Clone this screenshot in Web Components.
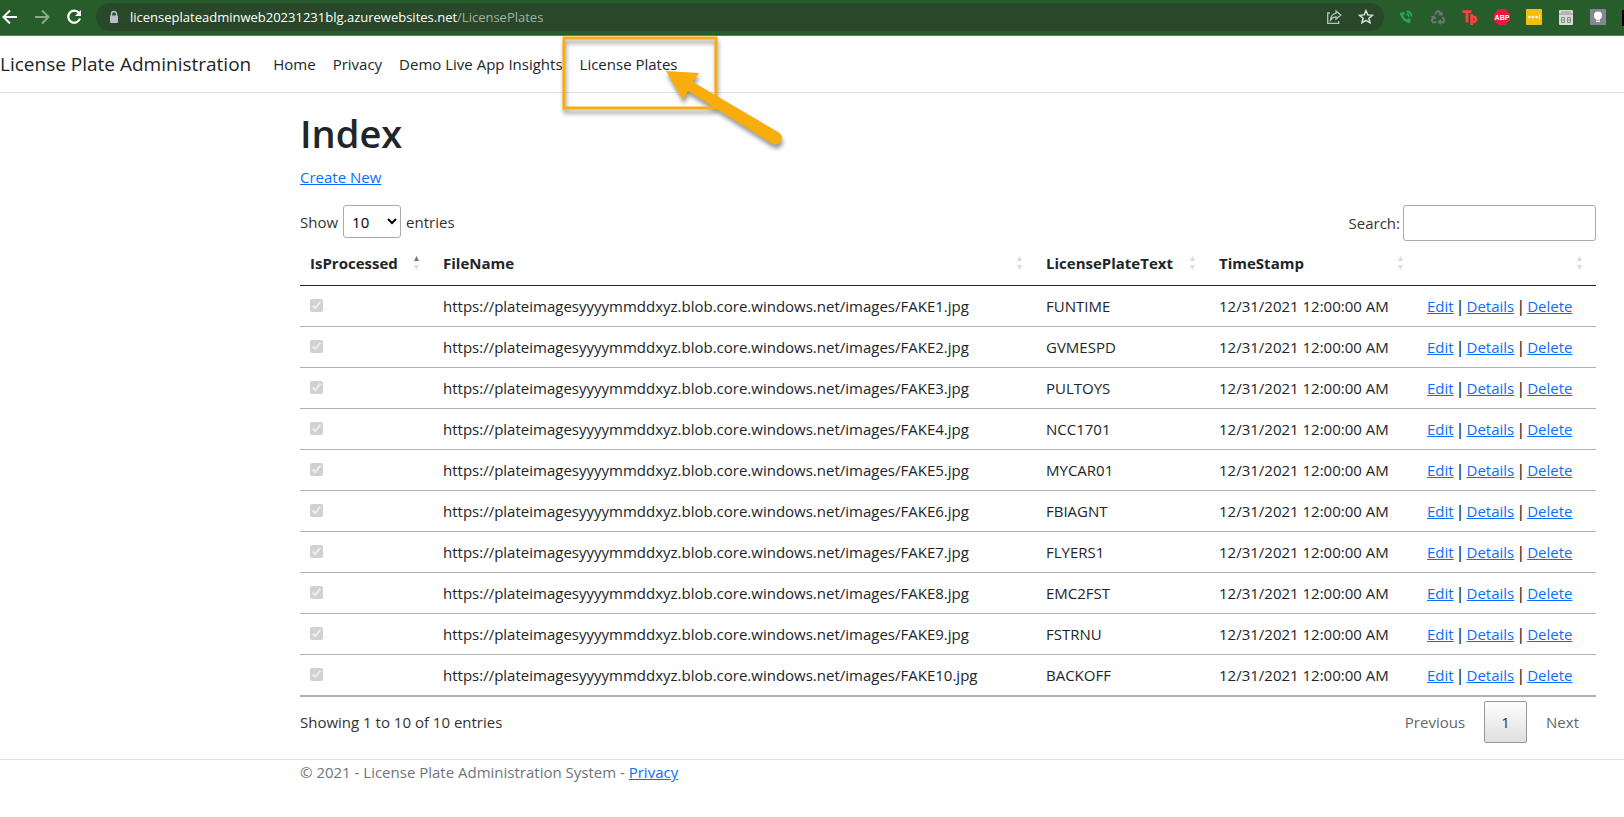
<!DOCTYPE html>
<html lang="en">
<head>
<meta charset="utf-8">
<title>Index - License Plate Administration</title>
<style>
  body { margin: 0; background: #fff; color: #212529; font: 15px/24px "Open Sans", "Noto Sans", sans-serif; --link: #0d6efd; --gutter: 300px; --end: 28px; overflow-x: hidden; }
</style>
</head>
<body>
<browser-bar host="licenseplateadminweb20231231blg.azurewebsites.net" path="/LicensePlates"></browser-bar>
<site-nav>
  <nav-link href="#home">Home</nav-link>
  <nav-link href="#privacy">Privacy</nav-link>
  <nav-link href="#insights">Demo Live App Insights</nav-link>
  <nav-link href="#plates" marked>License Plates</nav-link>
</site-nav>
<page-main heading="Index">
  <plate-table></plate-table>
</page-main>
<site-footer>© 2021 - License Plate Administration System - </site-footer>

<script>
const define = (name, html, setup) => {
  const tpl = document.createElement('template');
  tpl.innerHTML = html;
  customElements.define(name, class extends HTMLElement {
    constructor() {
      super();
      this.attachShadow({ mode: 'open' }).append(tpl.content.cloneNode(true));
    }
    connectedCallback() { if (setup) setup(this, this.shadowRoot); }
  });
};

define('browser-bar', `
<style>
  :host { display: flex; align-items: center; height: 35px; box-sizing: content-box; background: #275d2a; border-bottom: 1px solid #4f8253; font-size: 13px; line-height: 20px; overflow: hidden; }
  button { border: 0; padding: 0; background: none; display: block; flex: none; width: 16px; height: 16px; }
  svg { display: block; width: 16px; height: 16px; }
  .moves { display: flex; gap: 16px; padding: 0 14px 2px 2px; flex: none; }
  .address { flex: 1; display: flex; align-items: center; height: 28px; margin-bottom: 1px; border-radius: 14px; background: #284829; padding: 0 10px; box-sizing: border-box; min-width: 0; }
  .url { flex: 1; margin-left: 8px; color: #a2b1a3; white-space: nowrap; }
  .url b { font-weight: 400; color: #fff; }
  .tools { display: flex; gap: 16px; }
  .ext { display: flex; gap: 16px; padding: 0 16px 1px 14px; flex: none; }
  .more { width: 2px; height: 16px; background: #000; flex: none; }
</style>
<div class="moves">
  <button aria-label="Back"><svg viewBox="0 0 16 16" fill="none" stroke="#fff" stroke-width="2"><path d="M15 8H2M8 1.500 1.500 8 8 14.500"/></svg></button>
  <button aria-label="Forward"><svg viewBox="0 0 16 16" fill="none" stroke="#8ba98c" stroke-width="2"><path d="M1 8h13M8 1.500 14.500 8 8 14.500"/></svg></button>
  <button aria-label="Reload"><svg viewBox="0 0 16 16"><path d="M13 4A6 6 0 1 0 14 9.500" fill="none" stroke="#fff" stroke-width="2.200"/><path d="M15 1v6H9z" fill="#fff"/></svg></button>
</div>
<div class="address">
  <svg viewBox="0 0 16 16"><path d="M5.500 7V5a2.500 2.500 0 0 1 5 0v2" fill="none" stroke="#b9bfc6" stroke-width="1.500"/><rect x="4" y="6.500" width="8" height="7.500" rx="1" fill="#b9bfc6"/></svg>
  <span class="url"><b></b><span></span></span>
  <div class="tools">
    <button aria-label="Share"><svg viewBox="0 0 16 16" fill="none" stroke="#b8c3b9" stroke-width="1.300"><path d="M4 4H1.700v10.300h11V12"/><path d="M10 2l4.800 4L10 10V7.800C7.500 7.800 6 9 4.500 11 4.800 7.500 7 4.700 10 4.300z"/></svg></button>
    <button aria-label="Bookmark"><svg viewBox="0 0 16 16" fill="none" stroke="#dbe1db" stroke-width="1.500"><path d="M8 1.700l1.800 4.200 4.600.4-3.500 3 1.100 4.500L8 11.400l-4 2.400 1.100-4.500-3.500-3 4.600-.4z"/></svg></button>
  </div>
</div>
<div class="ext">
  <button aria-label="Calls"><svg viewBox="0 0 16 16"><g fill="none" stroke="#26a653"><path d="M3.500 3.500c0 5 3.500 9 9 9.300" stroke-width="2.600"/><path d="M2.500 5.800 6.500 4M9.500 13.500l2-4" stroke-width="3"/><path d="M8.500 2.500c3 0 5 2 5 5M8.500 5.200c1.500 0 2.500 1 2.500 2.500" stroke-width="1.800"/></g></svg></button>
  <button aria-label="Recycle"><svg viewBox="0 0 16 16" fill="none" stroke="#717475" stroke-width="2"><path d="M5 5.500 7 2.300h2l1.800 3.200M8.800 5.500h3V3M12.500 8l1.800 3.200-1 2H9.500M11 11l-2 2 2 2M6.500 13.200H3l-1.200-2L3.800 8M1.500 8.500 4 7.500l1.500 2.500"/></svg></button>
  <button aria-label="Tp"><svg viewBox="0 0 16 16" fill="none" stroke="#f2453d" stroke-width="2.800"><path d="M.5 2.600h9M5 2.600v11M9.600 5v11M9.600 9a2.400 2.400 0 1 1 0 2.500"/></svg></button>
  <button aria-label="Ad blocker"><svg viewBox="0 0 16 16"><path d="M4.700 0h6.600L16 4.700v6.600L11.300 16H4.700L0 11.300V4.700z" fill="#e8183e"/><text x="8" y="10.600" text-anchor="middle" font-size="7" font-weight="800" fill="#fff">ABP</text></svg></button>
  <button aria-label="Password"><svg viewBox="0 0 16 16"><rect width="16" height="16" rx="1" fill="#f4bd12"/><g fill="#fff"><circle cx="3.500" cy="8" r="1.200"/><circle cx="7" cy="8" r="1.200"/><circle cx="10.500" cy="8" r="1.200"/><path d="M13 5.500h1v5h-1z"/></g></svg></button>
  <button aria-label="Calendar"><svg viewBox="0 0 16 16"><rect x="1" y="1" width="14" height="15" rx="1" fill="#d9dbd8"/><path d="M1 5h14M3 3h10" stroke="#8c918c"/><path d="M3.500 8.500h3v5h-3zM9.500 8.500h3v5h-3zM3.500 11h3M9.500 11h3" fill="none" stroke="#858a85"/></svg></button>
  <button aria-label="Light"><svg viewBox="0 0 16 16"><rect width="16" height="16" rx="1" fill="#858691"/><circle cx="8" cy="6.500" r="4" fill="#fff"/><path d="M6 10h4v3H6z" fill="#fff"/><path d="M6 11.300h4" stroke="#858691" stroke-width=".8"/></svg></button>
</div>
<i class="more"></i>`, (el, root) => {
  root.querySelector('.url b').textContent = el.getAttribute('host');
  root.querySelector('.url span').textContent = el.getAttribute('path');
});

define('nav-link', `
<style>
  :host { display: block; position: relative; }
  a { display: block; padding: 8px; color: inherit; text-decoration: none; white-space: nowrap; }
  svg { display: none; position: absolute; left: -19px; top: -9px; overflow: visible; pointer-events: none; filter: drop-shadow(1px 4px 2px rgba(0,0,0,.4)); }
  :host([marked]) svg { display: block; }
</style>
<a><slot></slot></a>
<svg width="220" height="110" aria-hidden="true">
  <rect x="11" y="3" width="152" height="70" fill="none" stroke="#f9ad0d" stroke-width="3"/>
  <path d="M113 36l33 2-6 9 85 50q6 4 3 9-4 6-10 2L135 56l-5 9z" fill="#f9ad0d"/>
</svg>`, (el, root) => root.querySelector('a').href = el.getAttribute('href'));

define('site-nav', `
<style>
  :host { display: block; border-bottom: 1px solid #dee2e6; margin-bottom: 16px; }
  nav { display: flex; align-items: center; gap: 1px; height: 56px; }
  .brand { font-size: 19px; line-height: 30px; margin-right: 13px; color: inherit; text-decoration: none; white-space: nowrap; }
</style>
<nav><a class="brand" href="#top">License Plate Administration</a><slot></slot></nav>`);

define('page-main', `
<style>
  :host { display: block; padding: 0 var(--end) 0 var(--gutter); }
  h1 { margin: 0 0 8px; font-size: 38px; line-height: 48px; font-weight: 600; }
  p { margin: 0 0 16px; }
  a { color: var(--link); }
</style>
<h1></h1><p><a href="#create">Create New</a></p><slot></slot>`, (el, root) => {
  root.querySelector('h1').textContent = el.getAttribute('heading');
});

define('plate-table', `
<style>
  :host { display: block; }
  .bar { display: flex; justify-content: space-between; color: #333; height: 36px; }
  .length { display: flex; align-items: center; gap: 5px; height: 33px; }
  select { font: inherit; width: 58px; height: 33px; box-sizing: border-box; border: 1px solid #aaa; border-radius: 3px; padding: 4px; background: transparent; color: #000; }
  .search { display: flex; align-items: center; gap: 3px; }
  input[type=search] { font: inherit; width: 193px; height: 36px; box-sizing: border-box; border: 1px solid #aaa; border-radius: 3px; padding: 5px; background: transparent; margin: 0; }
  table { width: 100%; table-layout: fixed; border-collapse: separate; border-spacing: 0; border-bottom: 1px solid #b0b0b0; }
  .c1 { width: 133px; } .c3 { width: 173px; } .c4 { width: 208px; } .c5 { width: 179px; }
  th { text-align: left; font-weight: 700; font-size: 15px; padding: 10px; line-height: 24px; border-bottom: 1px solid #212529; }
  th div { display: flex; justify-content: space-between; align-items: center; height: 24px; padding-right: 3px; }
  th svg { width: 7px; height: 14px; fill: #dcdcdc; flex: none; }
  th.asc .up { fill: #777; }
  td { padding: 8px 10px; height: 24px; line-height: 24px; border-bottom: 1px solid #b0b0b0; white-space: nowrap; }
  td input { display: block; width: 13px; height: 13px; margin: 0 0 2px; }
  td i { font-family: "DejaVu Sans", sans-serif; font-style: normal; line-height: 1; }
  a { color: var(--link); }
  .foot { height: 62px; align-items: flex-start; }
  .info { padding-top: 13px; }
  .pages { display: flex; gap: 2px; padding-top: 4px; }
  .pages button { font: inherit; color: #666; height: 42px; padding: 0 16px; border: 1px solid transparent; border-radius: 2px; background: none; }
  .pages .now { width: 43px; color: #333; border-color: #979797; background: linear-gradient(#fdfdfd, #e0e0e0); }
</style>
<div class="bar">
  <div class="length"><label for="len">Show</label><select id="len"><option>10</option><option>25</option><option>50</option></select><span>entries</span></div>
  <div class="search"><label for="find">Search:</label><input id="find" type="search"></div>
</div>
<table>
  <colgroup><col class="c1"><col><col class="c3"><col class="c4"><col class="c5"></colgroup>
  <thead><tr></tr></thead><tbody></tbody>
</table>
<div class="bar foot">
  <div class="info">Showing 1 to 10 of 10 entries</div>
  <div class="pages"><button>Previous</button><button class="now">1</button><button>Next</button></div>
</div>`, (el, root) => {
  root.querySelector('thead tr').innerHTML = ['IsProcessed', 'FileName', 'LicensePlateText', 'TimeStamp', '']
    .map((t, i) => `<th${i ? '' : ' class="asc"'}><div><span>${t}</span><svg viewBox="0 0 7 14"><path class="up" d="M1 5h5L3.500 0z"/><path d="M1 9h5L3.500 14z"/></svg></div></th>`).join('');
  root.querySelector('tbody').innerHTML = ['FUNTIME', 'GVMESPD', 'PULTOYS', 'NCC1701', 'MYCAR01', 'FBIAGNT', 'FLYERS1', 'EMC2FST', 'FSTRNU', 'BACKOFF']
    .map((plate, i) => `<tr><td><input type="checkbox" checked disabled aria-label="Processed"></td><td>https://plateimagesyyyymmddxyz.blob.core.windows.net/images/FAKE${i + 1}.jpg</td><td>${plate}</td><td>12/31/2021 12:00:00 AM</td><td><a href="#edit">Edit</a> <i>|</i> <a href="#details">Details</a> <i>|</i> <a href="#delete">Delete</a></td></tr>`).join('');
});

define('site-footer', `
<style>
  :host { display: block; border-top: 1px solid #dee2e6; padding: 0 var(--end) 0 var(--gutter); color: #6c757d; }
  a { color: var(--link); }
</style>
<footer><slot></slot><a href="#privacy">Privacy</a></footer>`);
</script>
</body>
</html>
